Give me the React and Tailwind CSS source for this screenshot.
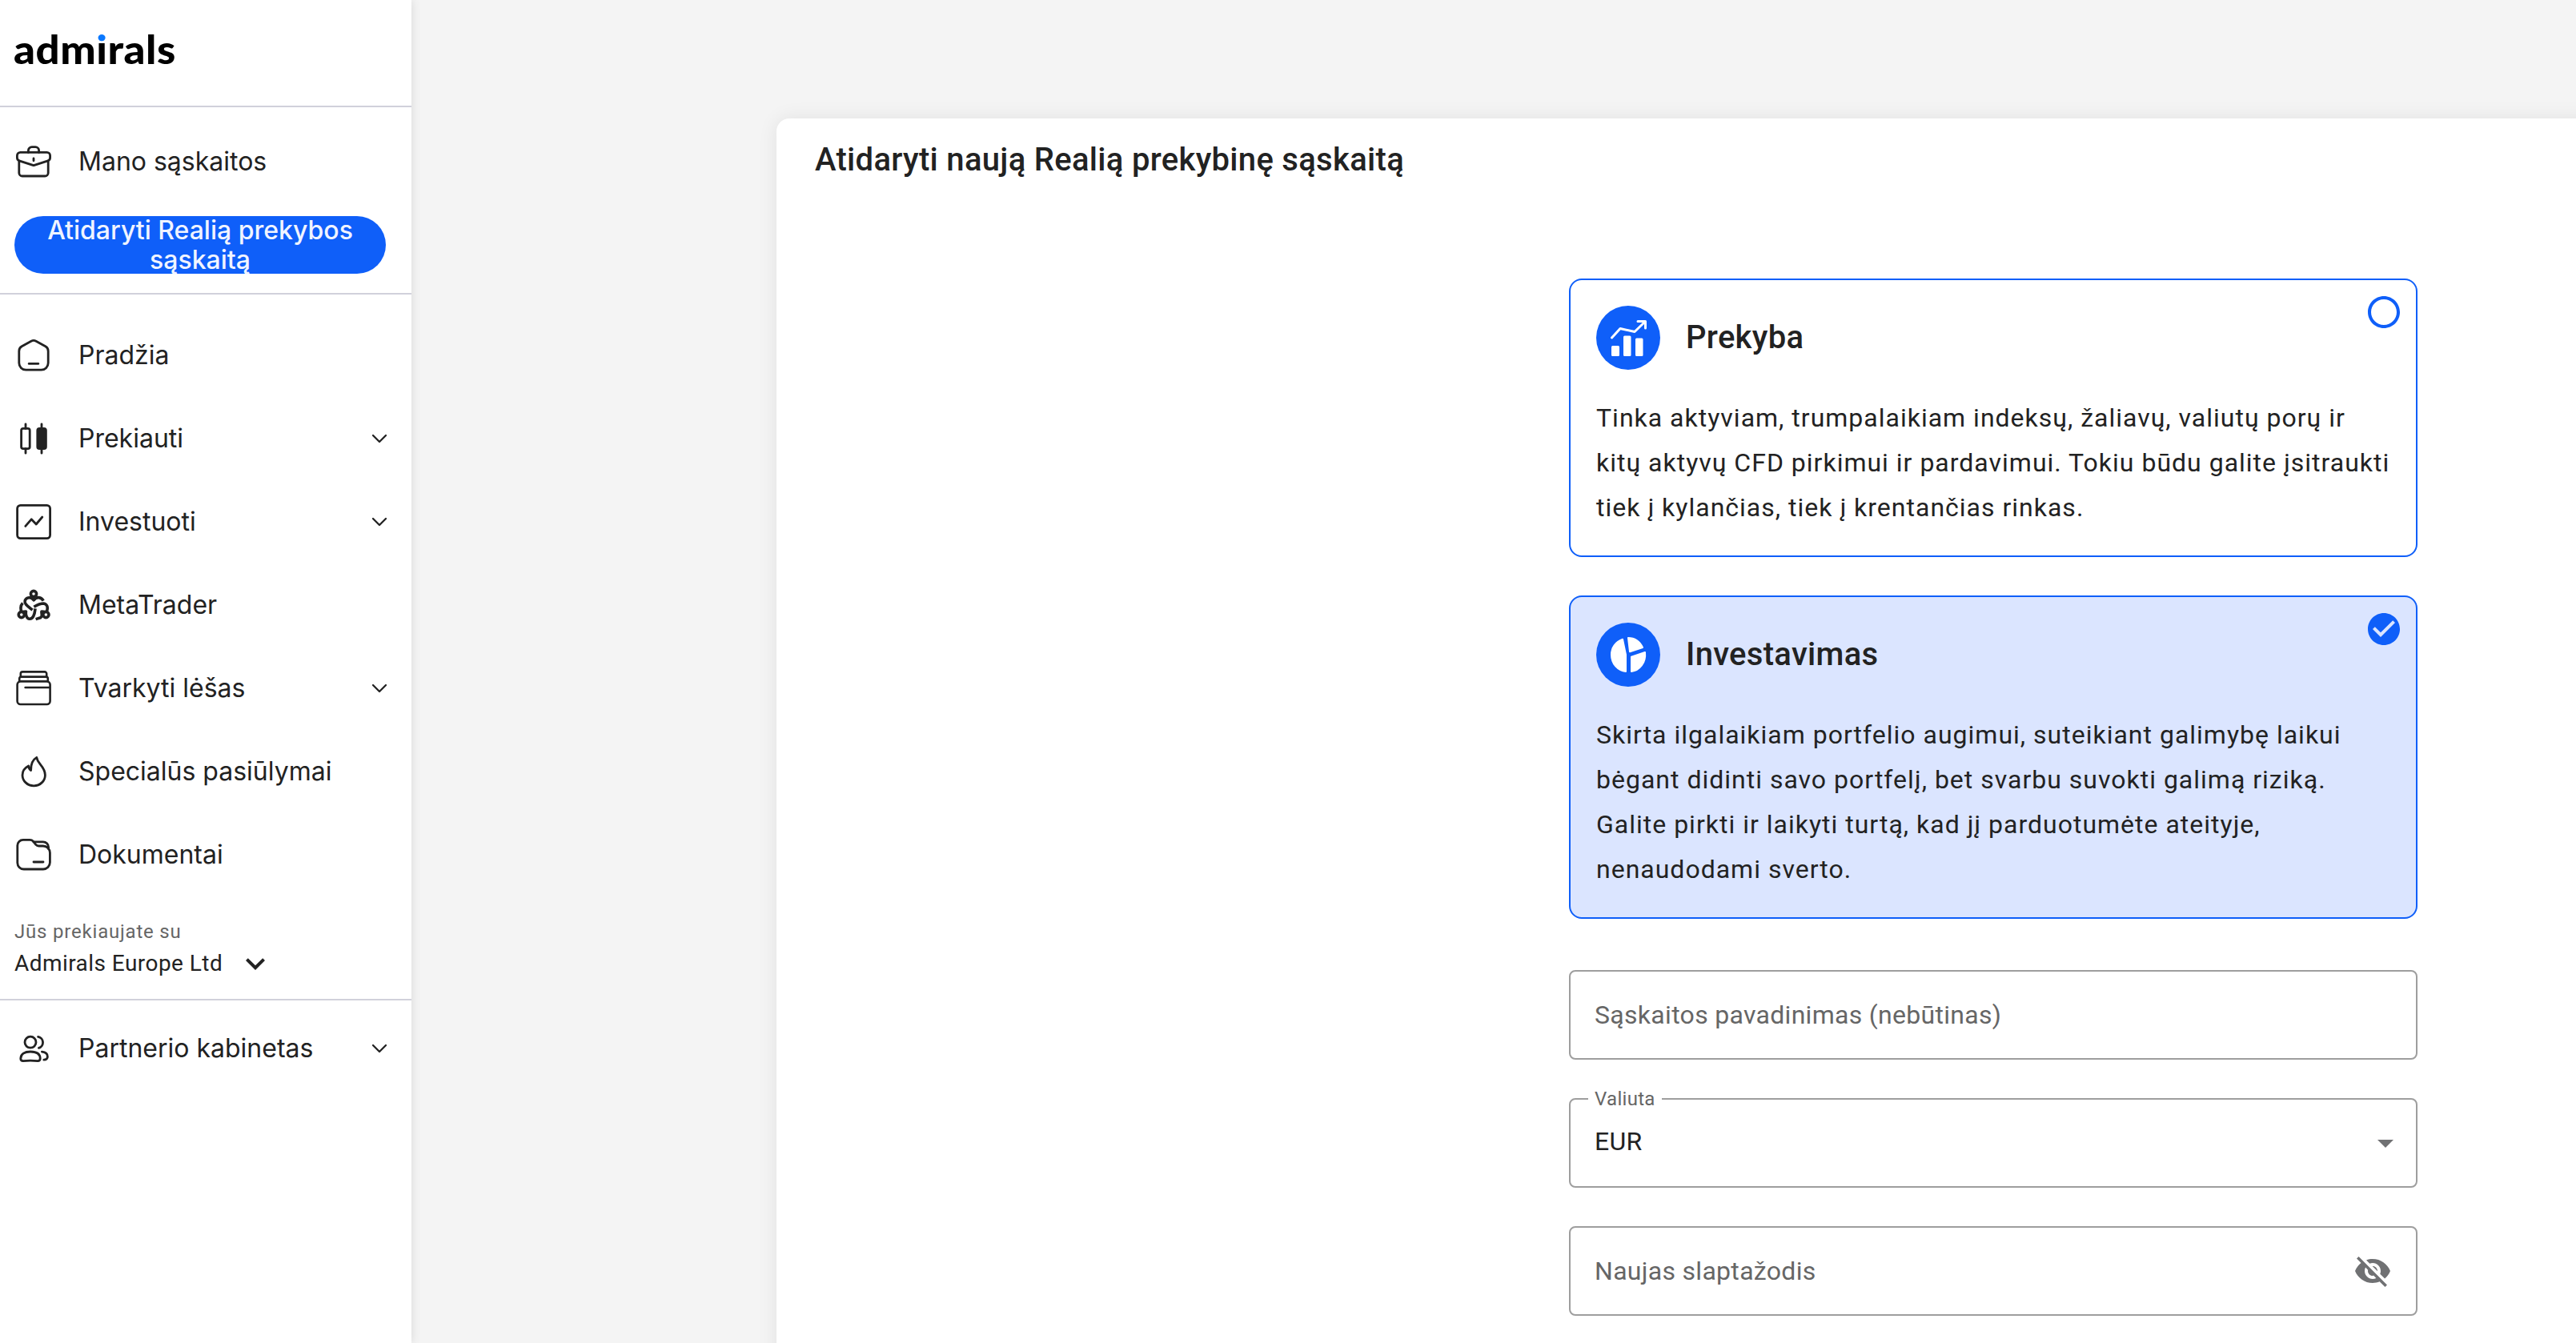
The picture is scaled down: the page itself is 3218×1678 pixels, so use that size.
import React, { useState } from 'react'
import {
  MdArrowDropDown,
  MdCheckCircle,
  MdExpandMore,
  MdRadioButtonUnchecked,
  MdVisibilityOff,
} from 'react-icons/md'

// Base for the outlined sidebar icons
const Icon = ({ children, sw = 1.4, cap = 'round' }) => (
  <svg
    viewBox="0 0 24 24"
    fill="none"
    stroke="currentColor"
    strokeWidth={sw}
    strokeLinecap={cap}
    strokeLinejoin="round"
    className="size-12 shrink-0"
  >
    {children}
  </svg>
)

const BriefcaseIcon = () => (
  <Icon>
    <path d="M8.7 6.2V5a2.2 2.2 0 0 1 2.2-2.2h2.2A2.2 2.2 0 0 1 15.3 5v1.2" />
    <path d="M3.7 6.2h16.6a2 2 0 0 1 2 2v1.3a2 2 0 0 1-1.3 1.9l-8.5 2.8a1.5 1.5 0 0 1-1 0L3 11.4a2 2 0 0 1-1.3-1.9V8.2a2 2 0 0 1 2-2z" />
    <path d="M2.9 11.4V19a2 2 0 0 0 2 2h14.2a2 2 0 0 0 2-2v-7.6M12 10v1.4" />
  </Icon>
)

const HomeIcon = () => (
  <Icon>
    <path d="M10.5 3.1a3 3 0 0 1 3 0l5.9 3.3a3.4 3.4 0 0 1 1.7 3v7.4a4.3 4.3 0 0 1-4.3 4.3H7.2a4.3 4.3 0 0 1-4.3-4.3V9.4a3.4 3.4 0 0 1 1.7-3z" />
    <path d="M9.1 17.2h5.8" />
  </Icon>
)

const CandlesIcon = () => (
  <Icon>
    <rect x="4.3" y="5.7" width="5.3" height="12.6" rx="1.2" />
    <rect x="14.4" y="5.7" width="5.3" height="12.6" rx="1.2" fill="currentColor" />
    <path d="M7 2.9v2.8M7 18.3v2.8M17 2.9v2.8M17 18.3v2.8" />
  </Icon>
)

const ChartIcon = () => (
  <Icon>
    <rect x="1.8" y="1.7" width="20.5" height="20.6" rx="2" />
    <path d="M6.9 14.7l3.7-4.3 3 3.1L17.4 9" />
  </Icon>
)

const MetaTraderIcon = () => (
  <Icon sw={1.8} cap="butt">
    <circle cx="12" cy="5" r="1.8" />
    <circle cx="4.4" cy="18" r="1.8" />
    <circle cx="19.7" cy="18" r="1.8" />
    <path d="M18.1 9.3C16.8 6.9 14 6.6 12.1 8.7 10.3 6.7 7.4 7 6.6 9.2c-.6 2 1.5 3.3 4.7 5.9" />
    <path d="M12.2 13.1c2-1.2 4.4-2.1 6.1-2.1 2 .3 2.9 2.3 1.9 5M17 16c.6 2.1.2 3.2-.7 3.900l-3 .9" />
    <path d="M5.200 10.800c-1.500 1.600-1.500 3.300-.8 5.200M7.200 16c-.3 2.500.7 4.700 2.200 4.600 2.100.2 3.300-2.600 3.600-6.400" />
    <path d="M10.300 7l1.800 1.900L13.700 7zM5.800 16.100l1.400-.1-.3 2zM18.300 16.100l-1.300-.1.2 1.900z" fill="currentColor" />
  </Icon>
)

const WalletIcon = () => (
  <Icon sw={1.3}>
    <path d="M3.9 4.7V2.9a1.2 1.2 0 0 1 1.2-1.2h13.8a1.2 1.2 0 0 1 1.2 1.2v1.8" />
    <path d="M3.1 7.6V5.9a1.1 1.1 0 0 1 1.1-1.1h15.6a1.1 1.1 0 0 1 1.1 1.1v1.7" />
    <rect x="1.8" y="7.7" width="20.5" height="14.3" rx="2" />
    <path d="M6.8 11.5H22" />
  </Icon>
)

const FlameIcon = () => (
  <Icon>
    <path d="M13.9 3.2C11.3 4.7 10.2 7.5 10.3 11.3 9.3 10.7 8.9 9.8 8.8 8.5 6.5 9.7 5 11.8 5 14.2a7.1 6.7 0 0 0 14.2 0c0-3-1.5-4.8-3-6.6-1.3-1.5-2-2.7-2.3-4.4z" />
  </Icon>
)

const FolderIcon = () => (
  <Icon>
    <path d="M1.9 6.2a3.5 3.5 0 0 1 3.5-3.5h4.2c.9 0 1.6.3 2.1.9l1.7 2.1c.5.6 1 .8 1.8.8h2.7a4.3 4.3 0 0 1 4.3 4.3v6a4.2 4.2 0 0 1-4.2 4.2H5.9a4 4 0 0 1-4-4z" />
    <path d="M11.9 3.9h6a3.4 3.4 0 0 1 3.4 3.4v1M12 16.5h6" />
  </Icon>
)

const PartnerIcon = () => (
  <Icon>
    <circle cx="10" cy="8.1" r="3.5" />
    <path d="M3.9 18.3c0-3 2.5-4.3 6.1-4.3s6.1 1.3 6.1 4.3c0 .9-.6 1.5-1.5 1.5-3-.3-6.2-.3-9.2 0-.9 0-1.5-.6-1.5-1.5z" />
    <path d="M14.8 4.7a3.6 3.6 0 0 1 .4 7M17.2 14.1c2.1.2 3.5 1.1 3.5 3 0 1.1-.8 1.9-2.3 2" />
  </Icon>
)

const Chevron = () => (
  <svg viewBox="0 0 24 24" fill="none" stroke="currentColor" strokeWidth="2.3" strokeLinecap="round" strokeLinejoin="round" className="size-6">
    <path d="M4 8l8 8 8-8" />
  </svg>
)

const navItems = [
  { label: 'Pradžia', icon: HomeIcon },
  { label: 'Prekiauti', icon: CandlesIcon, expandable: true },
  { label: 'Investuoti', icon: ChartIcon, expandable: true },
  { label: 'MetaTrader', icon: MetaTraderIcon },
  { label: 'Tvarkyti lėšas', icon: WalletIcon, expandable: true },
  { label: 'Specialūs pasiūlymai', icon: FlameIcon },
  { label: 'Dokumentai', icon: FolderIcon },
]

const NavItem = ({ label, icon: ItemIcon, expandable }) => (
  <a className="flex h-[104px] items-center pr-7 pl-[18px] text-[32px] leading-10">
    <ItemIcon />
    <span className="ml-8">{label}</span>
    {expandable && (
      <span className="ml-auto">
        <Chevron />
      </span>
    )}
  </a>
)

// Wordmark, the gradient colours only the dot of the "i"
const Logo = () => (
  <div className="w-max origin-left scale-x-[1.055] font-['Lato',sans-serif] text-[50px] leading-[64px] font-black tracking-[0.5px] text-black">
    adm
    <span className="bg-linear-to-b from-[#0a78ff] from-35% to-black to-35% bg-clip-text text-transparent">i</span>
    rals
  </div>
)

const Sidebar = () => (
  <aside className="relative z-10 w-[514px] shrink-0 bg-white font-['Inter',sans-serif] text-[#222] shadow-[0_0_12px_rgba(0,0,0,0.12)]">
    {/* Logo */}
    <div className="h-[134px] border-b-2 border-[#d1d1db] pt-[29px] pl-[17px]">
      <Logo />
    </div>

    {/* Accounts */}
    <div className="border-b-2 border-[#d1d1db] pt-4 pb-6">
      <NavItem label="Mano sąskaitos" icon={BriefcaseIcon} />
      <button className="mt-4 ml-[18px] flex h-[72px] w-[464px] items-center justify-center rounded-full bg-[#0f5ff9] px-8 text-[32px] leading-[37px] font-medium text-[#f0f4ff]">
        Atidaryti Realią prekybos
        <br />
        sąskaitą
      </button>
    </div>

    {/* Main navigation */}
    <nav className="pt-6">
      {navItems.map((item) => (
        <NavItem key={item.label} {...item} />
      ))}
    </nav>

    {/* Company switcher */}
    <div className="h-[130px] border-b-2 border-[#d1d1db] pt-7 pl-[18px] font-['Roboto',sans-serif]">
      <p className="text-2xl leading-8 tracking-[0.8px] text-[#666]">Jūs prekiaujate su</p>
      <div className="flex h-12 items-center text-[28px] tracking-[0.45px]">
        Admirals Europe Ltd
        <MdExpandMore className="ml-[17px] size-12" />
      </div>
    </div>

    <div className="pt-2">
      <NavItem label="Partnerio kabinetas" icon={PartnerIcon} expandable />
    </div>
  </aside>
)

const TradeBadge = () => (
  <svg viewBox="0 0 80 80" className="size-20">
    <circle cx="40" cy="40" r="40" fill="#0f5ff9" />
    <g fill="#fff">
      <rect x="19" y="50" width="10" height="13" rx="1.5" />
      <rect x="34" y="37.5" width="9.5" height="25.5" rx="1.5" />
      <rect x="49" y="40.5" width="9.5" height="22.5" rx="1.5" />
    </g>
    <path d="M19.5 40L30 28.5l18 4L61 20M52 19.5h9.5V28" fill="none" stroke="#fff" strokeWidth="3" strokeLinecap="round" strokeLinejoin="round" />
  </svg>
)

const InvestBadge = () => (
  <svg viewBox="0 0 80 80" className="size-20">
    <circle cx="40" cy="40" r="40" fill="#0f5ff9" />
    <g fill="#fff" stroke="#fff" strokeWidth="2" strokeLinejoin="round">
      <path d="M33 20.8C24 24 19 31.5 19 40c0 11.5 8 20 18 21V40z" />
      <path d="M40 19c8 0 14.5 4.5 18 12l-16 5.2z" />
      <path d="M44 42.6L61 37c1.5 13-7 23-17 24z" />
    </g>
  </svg>
)

const AccountOption = ({ title, badge: Badge, selected, onSelect, children }) => (
  <div
    onClick={onSelect}
    className={`relative rounded-2xl border-2 border-[#0f5ff9] p-8 ${selected ? 'bg-[#dbe5ff]' : 'bg-white'}`}
  >
    <div className="flex items-center gap-8">
      <Badge />
      <h3 className="text-[40px] leading-[52px] font-medium tracking-[0.3px]">{title}</h3>
    </div>
    <p className="mt-8 text-[32px] leading-[56px] tracking-[1px]">{children}</p>
    <span className="absolute top-4 right-4 text-5xl text-[#0f5ff9]">
      {selected ? <MdCheckCircle /> : <MdRadioButtonUnchecked />}
    </span>
  </div>
)

const fieldClass = 'relative flex h-28 items-center rounded-lg border-2 border-[#9e9e9e] pl-[30px] text-[32px] tracking-[0.3px]'

export default function App() {
  const [account, setAccount] = useState('invest')

  return (
    <div className="flex h-[1678px] w-[3218px] overflow-hidden bg-[#f4f4f4] font-['Roboto',sans-serif] text-[#222]">
      <Sidebar />

      <main className="flex-1 pt-[148px] pl-[456px]">
        {/* The card is wider than the window and runs off the right edge */}
        <section className="h-[1600px] w-[3040px] rounded-2xl bg-white pt-10 shadow-[0_0_24px_rgba(0,0,0,0.08)]">
          <h1 className="pl-12 text-[40px] leading-6 font-medium tracking-[0.3px]">Atidaryti naują Realią prekybinę sąskaitą</h1>

          <div className="mx-auto mt-[136px] w-[1060px]">
            {/* Account type */}
            <div className="flex flex-col gap-12">
              <AccountOption title="Prekyba" badge={TradeBadge} selected={account === 'trade'} onSelect={() => setAccount('trade')}>
                Tinka aktyviam, trumpalaikiam indeksų, žaliavų, valiutų porų ir kitų aktyvų CFD pirkimui ir pardavimui. Tokiu būdu galite įsitraukti tiek į kylančias, tiek į krentančias rinkas.
              </AccountOption>
              <AccountOption title="Investavimas" badge={InvestBadge} selected={account === 'invest'} onSelect={() => setAccount('invest')}>
                Skirta ilgalaikiam portfelio augimui, suteikiant galimybę laikui bėgant didinti savo portfelį, bet svarbu suvokti galimą riziką. Galite pirkti ir laikyti turtą, kad jį parduotumėte ateityje, nenaudodami sverto.
              </AccountOption>
            </div>

            {/* Fields */}
            <div className="mt-16 flex flex-col gap-12">
              <div className={`${fieldClass} text-[#666]`}>Sąskaitos pavadinimas (nebūtinas)</div>
              <div className={fieldClass}>
                <span className="absolute -top-4 left-[22px] bg-white px-2 text-2xl leading-[30px] text-[#666]">Valiuta</span>
                <span className="pb-1">EUR</span>
                <MdArrowDropDown className="mr-3.5 ml-auto size-12 text-[#707173]" />
              </div>
              <div className={`${fieldClass} text-[#666]`}>
                Naujas slaptažodis
                <MdVisibilityOff className="mr-[30px] ml-auto size-12 text-[#707173]" />
              </div>
            </div>
          </div>
        </section>
      </main>
    </div>
  )
}
